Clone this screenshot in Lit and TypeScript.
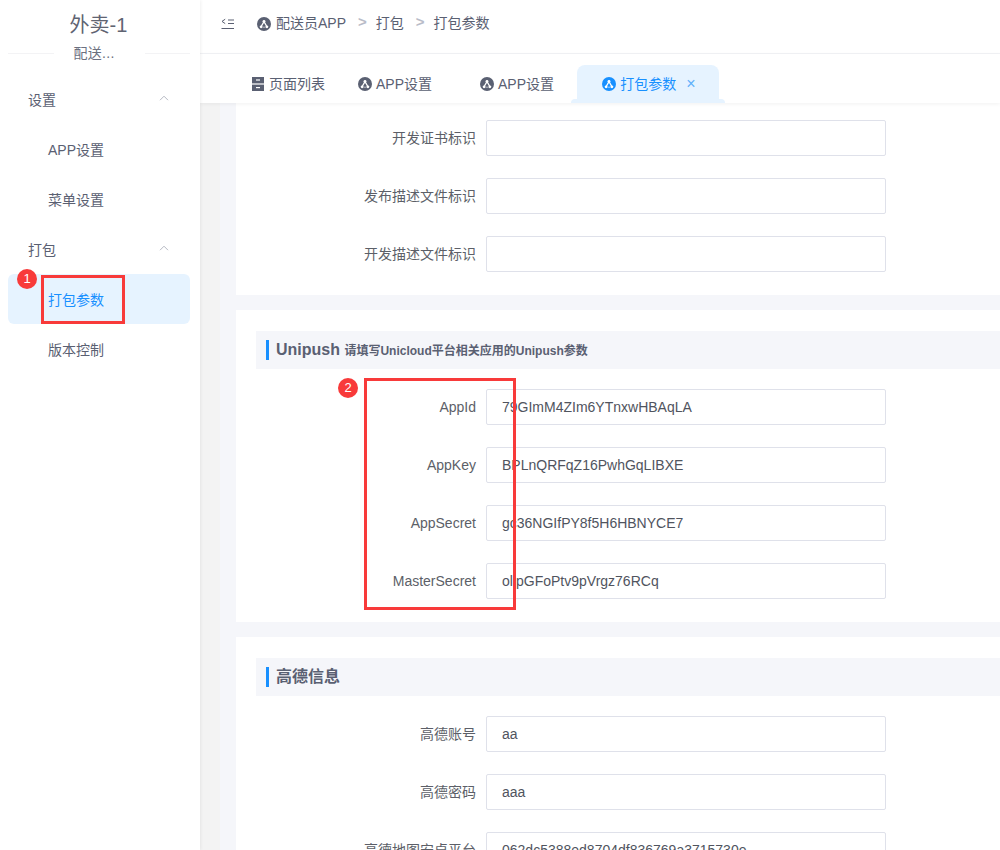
import { LitElement, html, css } from "lit";
import { customElement } from "lit/decorators.js";

const appIcon = () => html`<svg class="ico" viewBox="0 0 14 14" width="14" height="14">
  <circle cx="7" cy="7" r="7" fill="currentColor"></circle>
  <path d="M7 4.6 4.6 8.8M7 4.6 9.4 8.8" fill="none" stroke="#fff" stroke-width="1.3" stroke-linecap="round"></path>
  <path d="M5.6 10.2H8.4" fill="none" stroke="#fff" stroke-width="0.6"></path>
  <circle cx="7" cy="4.3" r="1.4" fill="#fff"></circle>
  <circle cx="4.1" cy="9.8" r="1.4" fill="#fff"></circle>
  <circle cx="9.9" cy="9.8" r="1.4" fill="#fff"></circle>
</svg>`;

const chevron = html`<svg class="chev" viewBox="0 0 10 6" width="10" height="6">
  <path d="M1 5.2 5 1.2 9 5.2" fill="none" stroke="#b5b8c2" stroke-width="1"></path>
</svg>`;

const drawerIcon = html`<svg class="ico" viewBox="0 0 12 14" width="12" height="14">
  <rect width="12" height="6.4" y="0" fill="#5a6072"></rect>
  <rect width="12" height="6.4" y="7.6" fill="#5a6072"></rect>
  <rect x="4" y="2.4" width="4" height="1.2" fill="#fff"></rect>
  <rect x="4" y="10" width="4" height="1.2" fill="#fff"></rect>
</svg>`;

const foldIcon = html`<svg class="fold" viewBox="0 0 13 12" width="13" height="12">
  <path d="M4.2 1.2 1 3.4 4.2 5.6" fill="none" stroke="#5a6072" stroke-width="1"></path>
  <path d="M7 2H13M7 5.5H13M0.5 10.5H13" fill="none" stroke="#5a6072" stroke-width="1.1"></path>
</svg>`;

type Row = [string, string];

@customElement("app-root")
export class AppRoot extends LitElement {
  static styles = css`
    :host {
      display: block;
      position: relative;
      width: 1000px;
      height: 850px;
      overflow: hidden;
      font-family: "Liberation Sans", "Noto Sans CJK SC", sans-serif;
      font-size: 14px;
      color: #5a6072;
      background: #fff;
    }
    .app { display: flex; height: 850px; }

    .side {
      width: 200px;
      flex: none;
      background: #fff;
      box-shadow: 1px 0 3px rgba(0, 0, 0, 0.06);
      position: relative;
      z-index: 2;
      display: flex;
      flex-direction: column;
    }
    .brand { height: 74px; display: flex; flex-direction: column; align-items: center; }
    .brand-title { font-size: 20px; line-height: 26px; margin: 12px 3px 0 0; color: #5f6472; }
    .brand-sub { display: flex; align-items: center; width: 100%; padding: 0 10px 0 8px; box-sizing: border-box; margin-top: 3px; line-height: 24px; color: #6b7080; }
    .brand-sub i { flex: 1; height: 1px; background: #f3f3f5; }
    .brand-sub span { width: 91px; padding-left: 20px; box-sizing: border-box; letter-spacing: 0.3px; }
    .menu { display: flex; flex-direction: column; padding: 0 10px 0 8px; }
    .item { height: 50px; display: flex; align-items: center; border-radius: 6px; }
    .group { padding-left: 20px; justify-content: space-between; padding-right: 21px; }
    .chev { margin-bottom: 2px; }
    .sub { padding-left: 40px; }
    .active { background: #e6f3ff; color: #1890ff; }

    .main { flex: 1; min-width: 0; display: flex; flex-direction: column; }
    .crumbs {
      flex: none;
      border-bottom: 1px solid #f2f3f6;
      display: flex;
      align-items: center;
      padding: 0 0 6px 21px;
      height: 47px;
    }
    .fold { margin-right: 23px; }
    .crumb { display: flex; align-items: center; gap: 5px; padding-bottom: 4px; }
    .crumb .ico { margin-top: 4px; }
    .ico { color: #5a6072; flex: none; }
    .sep { color: #b9bcc8; margin: 0 9px 0 12px; font-size: 15px; font-weight: bold; padding-bottom: 4px; }
    .tabs {
      height: 49px;
      flex: none;
      display: flex;
      align-items: flex-end;
      position: relative;
      z-index: 1;
      box-shadow: 0 1px 4px rgba(0, 0, 0, 0.06);
      background: #fff;
      padding-left: 51px;
    }
    .tab { height: 38px; box-sizing: border-box; display: flex; align-items: center; gap: 4px; padding-bottom: 2px; }
    .tab .ico { margin-top: 2px; }
    .t1 { width: 107px; gap: 5px; padding-left: 1px; }
    .t2 { width: 122px; }
    .t3 { width: 97px; }
    .tab.on {
      width: 142px;
      justify-content: center;
      background: #e6f3ff;
      color: #1890ff;
      border-radius: 8px 8px 0 0;
      position: relative;
      padding-left: 2px;
    }
    .tab.on .ico { color: #1890ff; }
    .tab.on::before, .tab.on::after {
      content: "";
      position: absolute;
      bottom: 0;
      width: 7px;
      height: 4px;
      background: #e6f3ff;
    }
    .tab.on::before { left: -6px; border-radius: 4px 0 0 0; }
    .tab.on::after { right: -6px; border-radius: 0 4px 0 0; }
    .close { font-size: 16px; margin: 2px 0 0 6px; color: #5fb0fb; line-height: 1; }

    .body {
      flex: 1;
      min-height: 0;
      overflow: hidden;
      background: #f5f6fa;
      border-left: 20px solid #f3f3f3;
      padding-left: 16px;
      display: flex;
      flex-direction: column;
      gap: 15px;
    }
    .card { background: #fff; padding: 21px 0 23px 20px; flex: none; }
    .card.first { padding: 17px 0 23px 20px; }
    .head {
      height: 38px;
      background: #f5f6fa;
      display: flex;
      align-items: center;
      padding-left: 10px;
      margin-bottom: 20px;
      font-weight: bold;
      font-size: 16px;
      color: #5a6072;
    }
    .head b { width: 3px; height: 20px; background: #1890ff; margin-right: 7px; flex: none; }
    .head small { font-size: 12px; font-weight: bold; }
    .head .cjk { padding-bottom: 4px; }
    .form { display: flex; flex-direction: column; gap: 22px; }
    .row { display: flex; align-items: center; height: 36px; }
    .label { width: 230px; text-align: right; padding-right: 10px; box-sizing: border-box; color: #5c5f68; white-space: nowrap; }
    .label.cjk { padding-bottom: 2px; }
    .input {
      width: 400px;
      height: 36px;
      box-sizing: border-box;
      border: 1px solid #dfe1ea;
      border-radius: 2px;
      padding: 0 15px;
      line-height: 34px;
      color: #50545e;
      background: #fff;
      white-space: nowrap;
      overflow: hidden;
    }

    .mark { position: absolute; box-sizing: border-box; border: 3px solid #f83a3a; z-index: 5; pointer-events: none; }
    .m1 { left: 41px; top: 275px; width: 84px; height: 49px; }
    .m2 { left: 364px; top: 378px; width: 152px; height: 232px; }
    .badge {
      position: absolute;
      width: 20px;
      height: 20px;
      border-radius: 50%;
      background: #f83a3a;
      color: #fff;
      font-size: 13px;
      line-height: 20px;
      text-align: center;
      z-index: 6;
    }
    .b1 { left: 17px; top: 269px; }
    .b2 { left: 338px; top: 378px; }
  `;

  private rows(rows: Row[]) {
    return html`<div class="form">
      ${rows.map(
        ([l, v]) => html`<div class="row">
          <div class="label ${/^[A-Za-z]+$/.test(l) ? "" : "cjk"}">${l}</div>
          <div class="input">${v}</div>
        </div>`
      )}
    </div>`;
  }

  render() {
    return html`<div class="app">
        <aside class="side">
          <div class="brand">
            <div class="brand-title">外卖-1</div>
            <div class="brand-sub"><i></i><span>配送...</span><i></i></div>
          </div>
          <nav class="menu">
            <div class="item group">设置 ${chevron}</div>
            <div class="item sub">APP设置</div>
            <div class="item sub">菜单设置</div>
            <div class="item group">打包 ${chevron}</div>
            <div class="item sub active">打包参数</div>
            <div class="item sub">版本控制</div>
          </nav>
        </aside>
        <main class="main">
          <div class="crumbs">
            ${foldIcon}
            <span class="crumb">${appIcon()}配送员APP</span>
            <span class="sep">&gt;</span>
            <span class="crumb">打包</span>
            <span class="sep">&gt;</span>
            <span class="crumb">打包参数</span>
          </div>
          <div class="tabs">
            <div class="tab t1">${drawerIcon}页面列表</div>
            <div class="tab t2">${appIcon()}APP设置</div>
            <div class="tab t3">${appIcon()}APP设置</div>
            <div class="tab on">${appIcon()}打包参数<span class="close">×</span></div>
          </div>
          <div class="body">
            <section class="card first">
              ${this.rows([
                ["开发证书标识", ""],
                ["发布描述文件标识", ""],
                ["开发描述文件标识", ""],
              ])}
            </section>
            <section class="card">
              <div class="head"><b></b><span>Unipush <small>请填写Unicloud平台相关应用的Unipush参数</small></span></div>
              ${this.rows([
                ["AppId", "79GImM4ZIm6YTnxwHBAqLA"],
                ["AppKey", "BPLnQRFqZ16PwhGqLIBXE"],
                ["AppSecret", "gc36NGIfPY8f5H6HBNYCE7"],
                ["MasterSecret", "olipGFoPtv9pVrgz76RCq"],
              ])}
            </section>
            <section class="card">
              <div class="head"><b></b><span class="cjk">高德信息</span></div>
              ${this.rows([
                ["高德账号", "aa"],
                ["高德密码", "aaa"],
                ["高德地图安卓平台", "062dc5388ed8704df836769a3715730e"],
              ])}
            </section>
          </div>
        </main>
      </div>
      <div class="mark m1"></div>
      <div class="badge b1">1</div>
      <div class="mark m2"></div>
      <div class="badge b2">2</div>`;
  }
}
